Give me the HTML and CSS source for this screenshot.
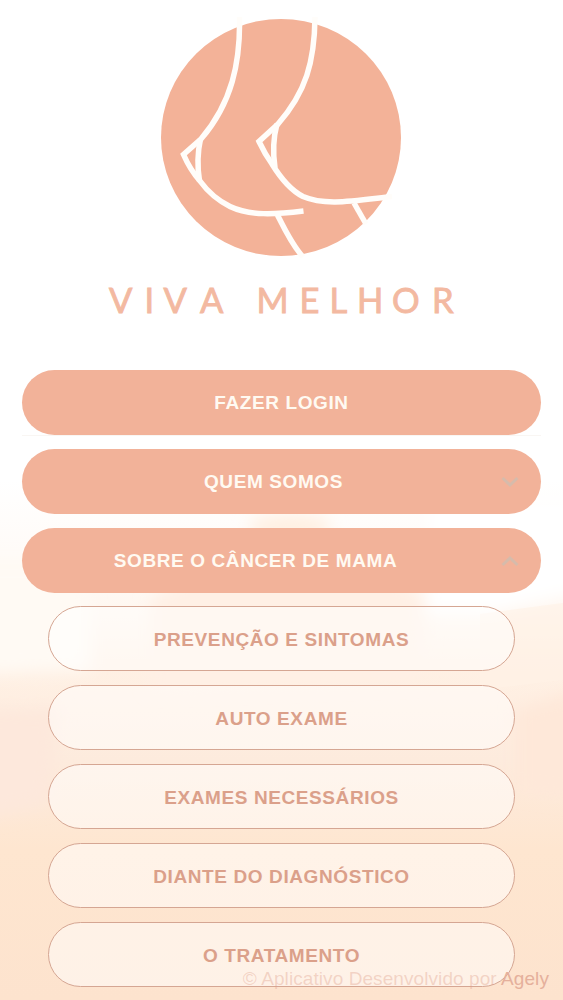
FILE: index.html
```html
<!DOCTYPE html>
<html lang="pt-br">
<head>
  <meta charset="UTF-8">
  <title>Viva Melhor</title>
  <link rel="stylesheet" href="styles.css">
</head>
<body>
  <!-- background -->
  <svg class="fundo" viewBox="0 0 563 1000" preserveAspectRatio="none">
    <defs>
      <linearGradient id="base" x1="0" y1="0" x2="0" y2="1">
        <stop offset="0.48" stop-color="#ffffff"/>
        <stop offset="0.59" stop-color="#fff9f4"/>
        <stop offset="0.66" stop-color="#fff1e5"/>
        <stop offset="0.76" stop-color="#fdebdd"/>
        <stop offset="0.85" stop-color="#fee6d0"/>
        <stop offset="1" stop-color="#fde3ce"/>
      </linearGradient>
      <filter id="soft" x="-20%" y="-20%" width="140%" height="140%">
        <feGaussianBlur stdDeviation="8"/>
      </filter>
    </defs>
    <rect width="563" height="1000" fill="url(#base)"/>
    <g filter="url(#soft)">
      <ellipse cx="290" cy="526" rx="42" ry="12" fill="#fff0e2"/>
      <path d="M150 600 L260 540 L320 540 L430 600 L420 680 L150 690Z" fill="#fff0e5"/>
      <path d="M430 500 H580 V592 L490 613 L425 612Z" fill="#ffffff"/>
      <path d="M-20 560 H40 L90 600 V670 L-20 674Z" fill="#fffaf4"/>
      <path d="M-20 710 L60 708 L50 805 L-20 820Z" fill="#fde8dc"/>
      <path d="M515 710 L580 690 V800 L515 790Z" fill="#fee8d9"/>
    </g>
    <path d="M480 614 L563 603 V680 L480 690Z" fill="#fff2e6" opacity="0.6"/>
  </svg>

  <header>
    <svg class="logo" width="563" height="340" viewBox="0 0 563 340">
      <ellipse cx="281" cy="137.5" rx="120" ry="118.5"/>
      <g class="tracos">
        <path d="M239.500 17 C240.500 62 232 103 201 139 L183.500 154.500 C188 165 193 173 200 181 C208 192 217 200 230 206.500 C250 216 275 214.500 303.500 211"/>
        <path d="M200.500 139 Q196 159 199.500 181"/>
        <path d="M277.500 215 C283 226 292 245 303 257"/>
        <path d="M315 17 C314.500 62 306 92 278 124 L259 141.500 C263 150 267 157 272 164 C280 177 290 190 303 196.500 C325 206 352 201 392 196.500"/>
        <path d="M277 124 Q271.500 144 275 168"/>
        <path d="M354 203 L366 224"/>
      </g>
      <text class="marca" y="312.800" x="109 144.500 163.500 200 256.500 299.500 329.500 357 392 432">VIVAMELHOR</text>
    </svg>
  </header>

  <nav class="menu">
    <div class="login">
      <a class="btn">FAZER LOGIN</a>
    </div>
    <a class="btn quem"><span>QUEM SOMOS</span>
      <svg class="seta" viewBox="0 0 18 12"><path d="M1.500 2 L9 9 L16.500 2"/></svg>
    </a>
    <a class="btn sobre"><span>SOBRE O CÂNCER DE MAMA</span>
      <svg class="seta" viewBox="0 0 18 12"><path d="M1.500 10 L9 3 L16.500 10"/></svg>
    </a>
    <div class="submenu">
      <a class="btn-sub">PREVENÇÃO E SINTOMAS</a>
      <a class="btn-sub">AUTO EXAME</a>
      <a class="btn-sub">EXAMES NECESSÁRIOS</a>
      <a class="btn-sub">DIANTE DO DIAGNÓSTICO</a>
      <a class="btn-sub">O TRATAMENTO</a>
    </div>
  </nav>

  <footer>© Aplicativo Desenvolvido por <b>Agely</b></footer>
</body>
</html>
```

FILE: styles.css
```css
* {
  box-sizing: border-box;
}
body {
  margin: 0;
  height: 1000px;
  overflow: hidden;
  position: relative;
  font-family: "Liberation Sans", Arial, sans-serif;
}
.fundo {
  position: absolute;
  top: 0;
  left: 0;
  width: 100%;
  height: 100%;
  z-index: -1;
}
header {
  height: 370px;
}
.logo {
  display: block;
  fill: #f3b298;
}
.tracos {
  fill: none;
  stroke: #fffdfa;
  stroke-width: 5.5;
}
.marca {
  font-family: Lato, sans-serif;
  font-size: 34.5px;
  fill: #f3b9a1;
  stroke: #f3b9a1;
  stroke-width: 0.9;
}
.menu, .submenu {
  display: flex;
  flex-direction: column;
  gap: 13.8px;
}
.menu {
  padding: 0 22px;
}
.submenu {
  padding: 0 26px;
}
.login {
  box-shadow: 0 1px 0 #f9f6f3;
}
.btn, .btn-sub {
  height: 65px;
  border-radius: 33px;
  display: flex;
  align-items: center;
  justify-content: center;
  font-size: 19px;
  font-weight: bold;
  letter-spacing: 0.6px;
  white-space: nowrap;
}
.btn {
  background: #f2b299;
  color: #fffaf2;
}
.btn-sub {
  background: rgba(255, 255, 255, 0.5);
  border: 1.5px solid #d5a693;
  color: #dba08a;
  padding-top: 3px;
}
.quem, .sobre {
  position: relative;
  padding-top: 1px;
}
.quem {
  padding-right: 16px;
}
.sobre {
  padding-right: 52px;
}
.seta {
  position: absolute;
  right: 22px;
  top: 27px;
  width: 18px;
  height: 12px;
  fill: none;
  stroke: #d6bbab;
  stroke-width: 3;
}
footer {
  position: absolute;
  right: 14px;
  bottom: 10px;
  font-size: 19px;
  letter-spacing: 0.08px;
  color: rgba(222, 160, 140, 0.38);
}
footer b {
  font-weight: normal;
  color: #e5b09c;
}
```
